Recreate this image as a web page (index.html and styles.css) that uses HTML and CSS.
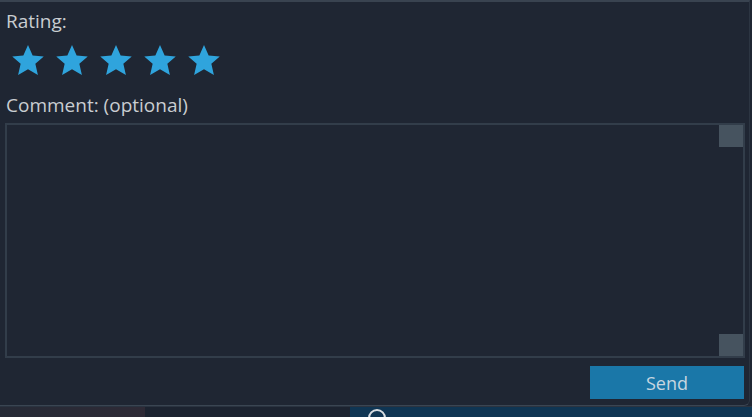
FILE: index.html
```html
<!DOCTYPE html>
<html lang="en">
<head>
    <meta charset="UTF-8">
    <title>Feedback</title>
    <link rel="stylesheet" href="styles.css">
</head>
<body>
    <div class="window">
        <div class="label">Rating:</div>
        <div class="stars">
            <svg class="star" viewBox="1.5 1.5 21 20"><path d="M12 1.5l3.1 7 7.4.6-5.6 4.9 1.7 7.5L12 17.6l-6.6 3.9 1.7-7.5L1.5 9.1l7.4-.6z"/></svg>
            <svg class="star" viewBox="1.5 1.5 21 20"><path d="M12 1.5l3.1 7 7.4.6-5.6 4.9 1.7 7.5L12 17.6l-6.6 3.9 1.7-7.5L1.5 9.1l7.4-.6z"/></svg>
            <svg class="star" viewBox="1.5 1.5 21 20"><path d="M12 1.5l3.1 7 7.4.6-5.6 4.9 1.7 7.5L12 17.6l-6.6 3.9 1.7-7.5L1.5 9.1l7.4-.6z"/></svg>
            <svg class="star" viewBox="1.5 1.5 21 20"><path d="M12 1.5l3.1 7 7.4.6-5.6 4.9 1.7 7.5L12 17.6l-6.6 3.9 1.7-7.5L1.5 9.1l7.4-.6z"/></svg>
            <svg class="star" viewBox="1.5 1.5 21 20"><path d="M12 1.5l3.1 7 7.4.6-5.6 4.9 1.7 7.5L12 17.6l-6.6 3.9 1.7-7.5L1.5 9.1l7.4-.6z"/></svg>
        </div>
        <div class="label">Comment: (optional)</div>
        <div class="comment-box">
            <div class="comment-area"></div>
            <div class="scrollbar">
                <div class="scroll-btn"></div>
                <div class="scroll-btn"></div>
            </div>
        </div>
        <div class="actions">
            <button class="btn">Send</button>
        </div>
    </div>
    <div class="taskbar">
        <div class="task-left"></div>
        <div class="task-mid"></div>
        <div class="task-right">
            <span class="task-icon"></span>
        </div>
    </div>
</body>
</html>
```

FILE: styles.css
```css
body {
    margin: 0;
    background: #1f2633;
    font-family: "Open Sans", "Noto Sans", sans-serif;
    overflow: hidden;
}
.window {
    height: 406px;
    box-sizing: border-box;
    border-top: 2px solid #394350;
    border-bottom: 1px solid #3a4552;
    border-right: 1px solid #2c3542;
    border-bottom-right-radius: 6px;
    padding: 8px 4px 0 5px;
    background: #1f2633;
    margin-right: 2px;
}
.label {
    color: #c9cdd1;
    font-size: 19px;
    line-height: 22px;
    padding-left: 1px;
}
.stars {
    display: flex;
    gap: 10px;
    padding: 13px 0 19px 6px;
}
.star {
    width: 34px;
    height: 30px;
    fill: #2fa4dd;
}
.comment-box {
    display: flex;
    margin-top: 7px;
    height: 235px;
    box-sizing: border-box;
    border: 2px solid #323d4a;
}
.comment-area {
    flex: 1;
}
.scrollbar {
    width: 24px;
    display: flex;
    flex-direction: column;
    justify-content: space-between;
}
.scroll-btn {
    height: 22px;
    background: #46535f;
}
.actions {
    display: flex;
    justify-content: flex-end;
    margin-top: 8px;
    padding-right: 1px;
}
.btn {
    width: 154px;
    height: 33px;
    background: #1a77a8;
    color: #c6d6e0;
    border: none;
    font-family: "Open Sans", "Noto Sans", sans-serif;
    font-size: 18px;
    padding: 0;
}
.taskbar {
    display: flex;
    height: 11px;
    border-top: 1px solid #2a3340;
}
.task-left {
    width: 145px;
    background: linear-gradient(90deg, #262a36, #2e2a36);
}
.task-mid {
    width: 205px;
    background: #1c2330;
}
.task-right {
    flex: 1;
    background: #0f3553;
    padding-left: 18px;
}
.task-icon {
    display: block;
    width: 18px;
    height: 18px;
    margin-top: 2px;
    border: 2px solid #d8dde2;
    border-radius: 50%;
    box-sizing: border-box;
}
```
